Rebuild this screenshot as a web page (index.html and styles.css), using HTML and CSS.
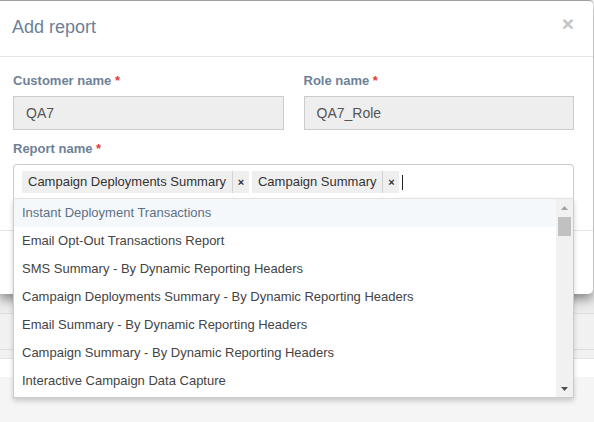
FILE: index.html
```html
<!DOCTYPE html>
<html lang="en">
<head>
<meta charset="utf-8">
<title>Add report</title>
<link rel="stylesheet" href="styles.css">
</head>
<body>
<div class="modal">
  <div class="modal-header">
    <h4 class="modal-title">Add report</h4>
    <span class="close">×</span>
  </div>
  <div class="modal-body">
    <div class="row">
      <div class="group">
        <label class="label">Customer name <span class="req">*</span></label>
        <div class="input">QA7</div>
      </div>
      <div class="group">
        <label class="label">Role name <span class="req">*</span></label>
        <div class="input">QA7_Role</div>
      </div>
    </div>
    <div class="group last">
      <label class="label">Report name <span class="req">*</span></label>
      <div class="select">
        <span class="tag"><span class="tag-text">Campaign Deployments Summary</span><span class="tag-x">×</span></span>
        <span class="tag"><span class="tag-text">Campaign Summary</span><span class="tag-x">×</span></span>
        <span class="cursor"></span>
        <div class="dropdown">
          <ul class="options">
            <li class="option active">Instant Deployment Transactions</li>
            <li class="option">Email Opt-Out Transactions Report</li>
            <li class="option">SMS Summary - By Dynamic Reporting Headers</li>
            <li class="option">Campaign Deployments Summary - By Dynamic Reporting Headers</li>
            <li class="option">Email Summary - By Dynamic Reporting Headers</li>
            <li class="option">Campaign Summary - By Dynamic Reporting Headers</li>
            <li class="option">Interactive Campaign Data Capture</li>
          </ul>
          <div class="scrollbar">
            <svg class="arrow-up" width="7" height="4" viewBox="0 0 7 4"><polygon points="0,4 7,4 3.5,0" fill="#a3a3a3"/></svg>
            <span class="thumb"></span>
            <svg class="arrow-down" width="7" height="4" viewBox="0 0 7 4"><polygon points="0,0 7,0 3.5,4" fill="#505050"/></svg>
          </div>
        </div>
      </div>
    </div>
  </div>
  <div class="modal-footer">
    <button class="btn">Save</button>
  </div>
</div>
<div class="strip strip1"></div>
<div class="strip strip2"></div>
<div class="strip strip3"></div>
<div class="strip strip4"></div>
</body>
</html>
```

FILE: styles.css
```css
html, body {
  margin: 0;
  padding: 0;
}
body {
  background: #f5f5f5;
  font-family: "Liberation Sans", Arial, sans-serif;
  min-height: 422px;
}
.modal {
  position: relative;
  z-index: 2;
  width: 593px;
  box-sizing: border-box;
  background: #fff;
  border-top: 1px solid #a0a0a0;
  border-radius: 0 4px 5px 0;
  box-shadow: 0 5px 12px rgba(0, 0, 0, 0.45);
}
.modal-header {
  display: flex;
  justify-content: space-between;
  align-items: flex-start;
  padding: 16px 19px 19px 12px;
  border-bottom: 1px solid #e5e5e5;
}
.modal-title {
  margin: 0;
  font-size: 18px;
  line-height: 20px;
  font-weight: normal;
  color: #6c7f96;
}
.close {
  font-size: 21px;
  line-height: 20px;
  font-weight: bold;
  color: #c4c4c4;
  margin-top: -3px;
}
.modal-body {
  padding: 15px 19px 32px 13px;
}
.row {
  display: grid;
  grid-template-columns: 1fr 1fr;
  column-gap: 20px;
}
.group {
  margin-bottom: 10px;
}
.group.last {
  margin-bottom: 0;
}
.label {
  display: block;
  font-size: 13px;
  line-height: 18px;
  font-weight: bold;
  color: #6f8198;
  margin-bottom: 6px;
}
.req {
  color: #e83a3a;
}
.input {
  height: 34px;
  box-sizing: border-box;
  border: 1px solid #cccccc;
  background: #eeeeee;
  padding: 0 12px;
  font-size: 14px;
  line-height: 32px;
  color: #555;
}
.select {
  position: relative;
  height: 34px;
  box-sizing: border-box;
  border: 1px solid #cccccc;
  border-bottom: 0;
  border-radius: 4px 4px 0 0;
  padding: 6px 8px 0;
  display: flex;
  align-items: flex-start;
  gap: 3px;
}
.tag {
  display: flex;
  height: 22px;
  background: #efefef;
  font-size: 13px;
  line-height: 22px;
  color: #333;
  white-space: nowrap;
}
.tag-text {
  padding: 0 6px;
}
.tag-x {
  width: 16px;
  border-left: 1px solid #d2d2d2;
  text-align: center;
  font-weight: bold;
  font-size: 11px;
  color: #333;
}
.cursor {
  width: 1px;
  height: 15px;
  margin-top: 4px;
  background: #222;
}
.dropdown {
  position: absolute;
  top: 100%;
  left: -1px;
  right: -1px;
  height: 200px;
  box-sizing: border-box;
  border: 1px solid #cccccc;
  border-top-color: #e2e2e2;
  background: #fff;
  display: flex;
  box-shadow: 0 3px 5px rgba(0, 0, 0, 0.18);
  z-index: 5;
}
.options {
  flex: 1;
  list-style: none;
  margin: 0;
  padding: 0;
  overflow: hidden;
}
.option {
  height: 28px;
  line-height: 28px;
  padding-left: 8px;
  font-size: 13px;
  color: #444;
  white-space: nowrap;
}
.option.active {
  background: #f4f8fb;
  color: #5d7087;
}
.scrollbar {
  width: 17px;
  background: #f1f1f1;
  display: flex;
  flex-direction: column;
  align-items: center;
}
.arrow-up {
  display: block;
  margin-top: 7px;
}
.thumb {
  display: block;
  width: 13px;
  height: 19px;
  margin-top: 7px;
  background: #c1c1c1;
}
.arrow-down {
  display: block;
  margin-top: auto;
  margin-bottom: 6px;
}
.modal-footer {
  display: flex;
  justify-content: flex-end;
  border-top: 1px solid #e5e5e5;
  padding: 16px 19px 15px;
}
.btn {
  height: 32px;
  box-sizing: border-box;
  border: 1px solid #cccccc;
  border-radius: 3px;
  background: #fff;
  padding: 0 14px;
  font-family: "Liberation Sans", Arial, sans-serif;
  font-size: 14px;
  color: #333;
}
.strip1 {
  height: 19px;
  background: #ececec;
  border-bottom: 1px solid #dddddd;
}
.strip2 {
  height: 35px;
  background: #f1f1f1;
  border-bottom: 1px solid #dddddd;
}
.strip3 {
  height: 8px;
  background: #f1f1f1;
  border-bottom: 1px solid #e3e3e3;
}
.strip4 {
  height: 18px;
  background: #ffffff;
}
```
